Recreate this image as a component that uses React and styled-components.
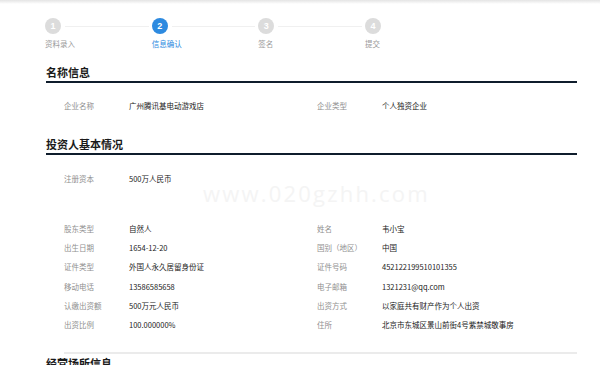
import React from "react";
import styled, { createGlobalStyle } from "styled-components";

const Global = createGlobalStyle`
  html, body { margin: 0; padding: 0; background: #fff; }
  body { font-family: "Noto Sans CJK SC", "Noto Sans", sans-serif; color: #333; overflow: hidden; }
`;

const TopShade = styled.div`
  height: 4px;
  background: linear-gradient(#e4e4e4, #fff);
`;

const Page = styled.div`
  padding: 0 23px 0 46px;
  position: relative;
`;

const Steps = styled.div`
  display: flex;
  margin-top: 14px;
  margin-left: -1px;
`;

const Step = styled.div`
  flex: ${(p) => (p.$last ? "0 0 auto" : "0 0 106.67px")};
  display: flex;
  flex-direction: column;
`;

const StepHead = styled.div`
  display: flex;
  align-items: center;
`;

const Dot = styled.div`
  width: 16px;
  height: 16px;
  border-radius: 50%;
  background: ${(p) => (p.$active ? "#2d8ae0" : "#dcdcdc")};
  color: #fff;
  font: bold 9px/16px "Liberation Sans", Arial, sans-serif;
  text-align: center;
  flex: none;
`;

const Connector = styled.div`
  flex: 1;
  height: 1px;
  background: #f0f0f0;
  margin: 0 3px 0 4px;
`;

const StepLabel = styled.div`
  margin-top: 5px;
  font-size: 7.5px;
  line-height: 10px;
  color: ${(p) => (p.$active ? "#2d8ae0" : "#9a9a9a")};
  white-space: nowrap;
`;

const SectionTitle = styled.div`
  font-size: 11px;
  font-weight: bold;
  line-height: 14px;
  color: #1a1a1a;
  padding-bottom: 2px;
  border-bottom: 2px solid #0f1d2c;
  margin-top: ${(p) => p.$mt}px;
`;

const PlainTitle = styled.div`
  font-size: 11px;
  font-weight: bold;
  line-height: 14px;
  color: #1a1a1a;
  margin-top: ${(p) => p.$mt}px;
`;

const Grid = styled.div`
  display: grid;
  grid-template-columns: 253px 1fr;
  grid-auto-rows: 19.3px;
  padding-left: 18px;
  margin-top: ${(p) => p.$mt}px;
`;

const Field = styled.div`
  display: flex;
  align-items: center;
  font-size: 7.5px;
  white-space: nowrap;
`;

const Label = styled.span`
  width: 65px;
  flex: none;
  color: #8f8f8f;
`;

const Value = styled.span`
  color: #222;
`;

const Divider = styled.div`
  height: 2px;
  background: #ebebeb;
  margin: 18px 0 0 18px;
`;

const Watermark = styled.div`
  position: absolute;
  left: 203px;
  top: 161px;
  font: 22px/28px "Open Sans", sans-serif;
  letter-spacing: 2.2px;
  color: #f4f4f4;
  pointer-events: none;
`;

const steps = ["资料录入", "信息确认", "签名", "提交"];

const basic = [
  ["股东类型", "自然人", "姓名", "韦小宝"],
  ["出生日期", "1654-12-20", "国别（地区）", "中国"],
  ["证件类型", "外国人永久居留身份证", "证件号码", "452122199510101355"],
  ["移动电话", "13586585658", "电子邮箱", "1321231@qq.com"],
  ["认缴出资额", "500万元人民币", "出资方式", "以家庭共有财产作为个人出资"],
  ["出资比例", "100.000000%", "住所", "北京市东城区景山前街4号紫禁城敬事房"],
];

export default function App() {
  return (
    <>
      <Global />
      <TopShade />
      <Page>
        <Steps>
          {steps.map((s, i) => {
            const last = i === steps.length - 1;
            return (
              <Step key={s} $last={last}>
                <StepHead>
                  <Dot $active={i === 1}>{i + 1}</Dot>
                  {!last && <Connector />}
                </StepHead>
                <StepLabel $active={i === 1}>{s}</StepLabel>
              </Step>
            );
          })}
        </Steps>

        <SectionTitle $mt={16}>名称信息</SectionTitle>
        <Grid $mt={13}>
          <Field><Label>企业名称</Label><Value>广州腾讯基电动游戏店</Value></Field>
          <Field><Label>企业类型</Label><Value>个人独资企业</Value></Field>
        </Grid>

        <SectionTitle $mt={22}>投资人基本情况</SectionTitle>
        <Grid $mt={14}>
          <Field><Label>注册资本</Label><Value>500万人民币</Value></Field>
        </Grid>
        <Grid $mt={30}>
          {basic.map((r) => (
            <React.Fragment key={r[0]}>
              <Field><Label>{r[0]}</Label><Value>{r[1]}</Value></Field>
              <Field><Label>{r[2]}</Label><Value>{r[3]}</Value></Field>
            </React.Fragment>
          ))}
        </Grid>
        <Divider />
        <PlainTitle $mt={2}>经营场所信息</PlainTitle>
        <Watermark>www.020gzhh.com</Watermark>
      </Page>
    </>
  );
}
